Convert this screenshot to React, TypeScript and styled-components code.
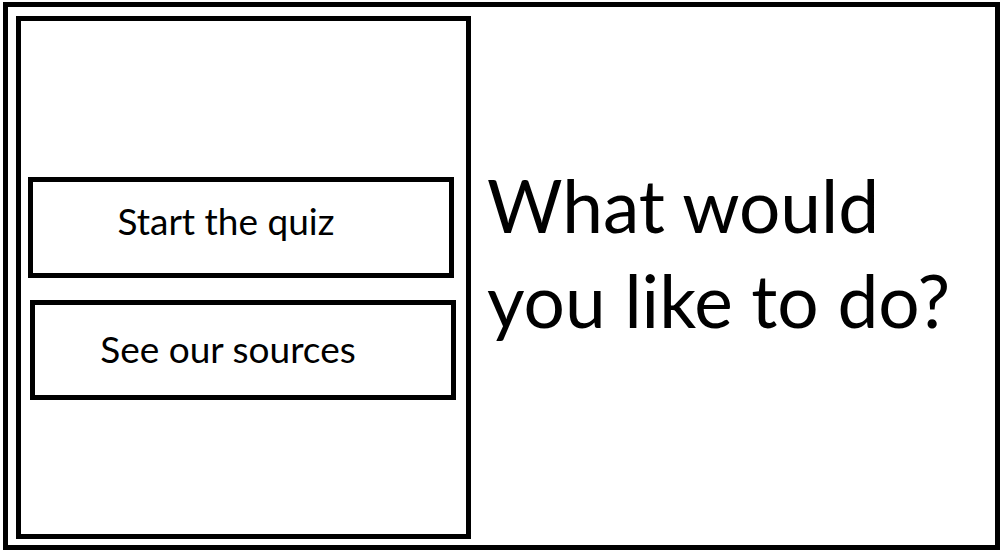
import React, {FC} from "react";
import styled, {createGlobalStyle} from 'styled-components';

const GlobalStyle = createGlobalStyle`
  html, body {
    margin: 0;
    padding: 0;
    background: #ffffff;
  }
  body {
    font-family: Lato, "Liberation Sans", sans-serif;
    color: #000000;
  }
`;

const Frame = styled.div`
  box-sizing: border-box;
  width: 997px;
  height: 548px;
  margin: 2px 0 0 3px;
  border: 5px solid #000;
  display: flex;
  flex-direction: row;
  padding: 9px 0 6px 8px;
`;

const Menu = styled.nav`
  box-sizing: border-box;
  width: 455px;
  flex-shrink: 0;
  border: 5px solid #000;
  display: flex;
  flex-direction: column;
  justify-content: center;
  padding-top: 22px;
  gap: 22px;
`;

const MenuButton = styled.button<{$offset: number; $lift: number}>`
  box-sizing: border-box;
  width: 426px;
  height: ${p => p.$offset > 7 ? 100 : 101}px;
  margin-left: ${p => p.$offset}px;
  border: 5px solid #000;
  background: #fff;
  padding: 0 30px ${p => p.$lift}px 0;
  display: flex;
  align-items: center;
  justify-content: center;
  font-family: Lato, "Liberation Sans", sans-serif;
  font-size: 37px;
  color: #000;
  cursor: pointer;
`;

const Prompt = styled.div`
  flex: 1;
  display: flex;
  align-items: center;
  padding: 0 0 50px 16px;
`;

const Question = styled.h1`
  margin: 0;
  font-family: Lato, "Liberation Sans", sans-serif;
  font-weight: 400;
  font-size: 73px;
  line-height: 95px;
`;

const App: FC = () => {
  return (
    <>
      <GlobalStyle />
      <Frame>
        <Menu>
          <MenuButton $offset={7} $lift={14}>Start the quiz</MenuButton>
          <MenuButton $offset={9} $lift={4}>See our sources</MenuButton>
        </Menu>
        <Prompt>
          <Question>
            What would<br />
            you like to do?
          </Question>
        </Prompt>
      </Frame>
    </>
  );
}

export default App;
